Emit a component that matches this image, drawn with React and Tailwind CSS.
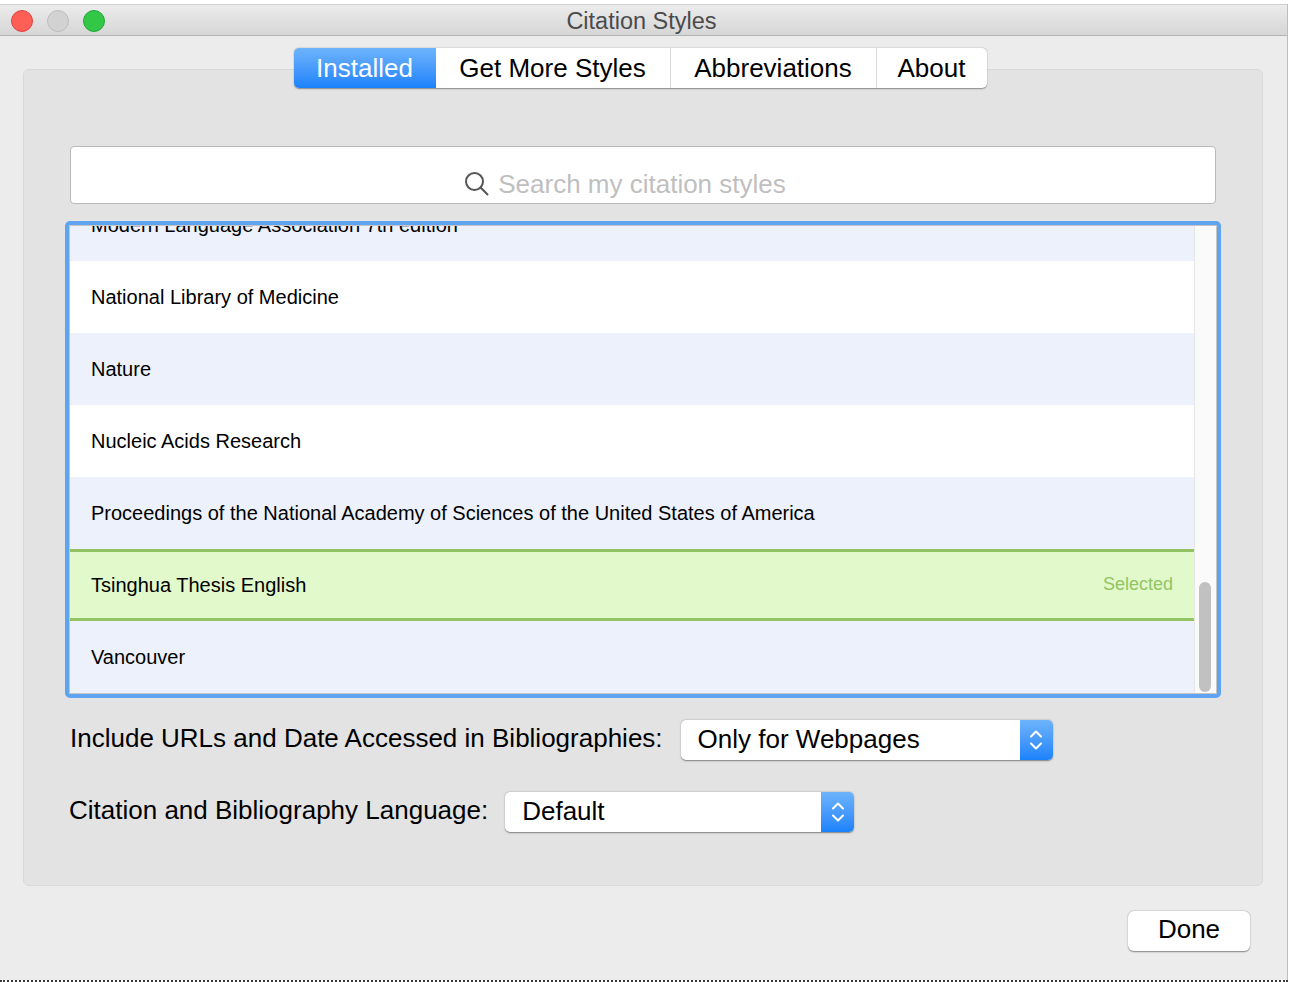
import React from "react";

const font = { fontFamily: '"Liberation Sans", Arial, sans-serif' };

function Chevrons() {
  return (
    <svg width="14" height="24" viewBox="0 0 14 24" fill="none" stroke="white" strokeWidth="2" strokeLinecap="round" strokeLinejoin="round">
      <path d="M2 8.5 L7 3.5 L12 8.5" />
      <path d="M2 15.5 L7 20.5 L12 15.5" />
    </svg>
  );
}

function Popup({ width, label }) {
  return (
    <div
      className="flex h-[40px] items-stretch rounded-[5px] bg-white shadow-[0_0.5px_1.5px_rgba(0,0,0,0.45)] overflow-hidden"
      style={{ width }}
    >
      <div className="flex flex-1 items-center pb-[3px] pl-[17px] text-[26px] leading-[30px] text-black">{label}</div>
      <div className="flex w-[33px] items-center justify-center bg-gradient-to-b from-[#6db3fb] to-[#1a82fb]">
        <Chevrons />
      </div>
    </div>
  );
}

const rows = [
  { t: "Modern Language Association 7th edition", bg: "bg-[#edf1fb]" },
  { t: "National Library of Medicine", bg: "bg-white" },
  { t: "Nature", bg: "bg-[#edf1fb]" },
  { t: "Nucleic Acids Research", bg: "bg-white" },
  { t: "Proceedings of the National Academy of Sciences of the United States of America", bg: "bg-[#edf1fb]" },
  { t: "Tsinghua Thesis English", bg: "sel" },
  { t: "Vancouver", bg: "bg-[#edf1fb]" },
];

export default function App() {
  return (
    <div className="relative h-[982px] w-[1290px] overflow-hidden bg-white" style={font}>
      <div className="mt-[4px] flex h-[976px] w-[1288px] flex-col border-r border-[#bdbdbd] bg-[#ececec]">
        {/* Title bar */}
        <div className="relative flex h-[32px] shrink-0 items-center justify-center border-t border-b border-t-[#d0d0d0] border-b-[#b3b3b3] bg-gradient-to-b from-[#ececec] to-[#d6d6d6]">
          <div className="absolute left-[11px] top-[5px] flex gap-[14px]">
            <div className="h-[22px] w-[22px] rounded-full border border-[#e0443e] bg-[#fd5f57]" />
            <div className="h-[22px] w-[22px] rounded-full border border-[#bdbdbd] bg-[#d2d2d2]" />
            <div className="h-[22px] w-[22px] rounded-full border border-[#20a833] bg-[#33c748]" />
          </div>
          <span className="pr-[4px] pt-[2px] text-[23.5px] leading-[28px] text-[#4b4b4b]">Citation Styles</span>
        </div>

        {/* Body */}
        <div className="flex flex-1 flex-col pt-[12px]">
          {/* Tabs */}
          <div className="relative z-10 flex justify-center pr-[7px]">
            <div className="flex h-[40px] overflow-hidden rounded-[5px] bg-white text-[26px] shadow-[0_0.5px_1.5px_rgba(0,0,0,0.4)]">
              <div className="flex w-[142px] items-center justify-center bg-gradient-to-b from-[#6db3fb] to-[#1a82fb] text-white">
                Installed
              </div>
              <div className="flex w-[235px] items-center justify-center border-r border-[#dadada] text-black">
                Get More Styles
              </div>
              <div className="flex w-[206px] items-center justify-center border-r border-[#dadada] text-black">
                Abbreviations
              </div>
              <div className="flex w-[110px] items-center justify-center text-black">About</div>
            </div>
          </div>

          {/* Panel */}
          <div className="mx-[23px] -mt-[19px] flex h-[817px] w-[1240px] flex-col rounded-[6px] border border-[#d9d9d9] bg-[#e3e3e3] px-[41px] pt-[76px]">
            {/* Search */}
            <div className="mx-[5px] flex h-[58px] items-center justify-center rounded-[4px] border border-[#b9b9b9] bg-white pr-[36px] pt-[18px]">
              <svg width="26" height="26" viewBox="0 0 26 26" fill="none" stroke="#555" strokeWidth="2">
                <circle cx="10.5" cy="10.5" r="8.5" />
                <path d="M16.8 16.8 L23.5 23.5" strokeLinecap="round" />
              </svg>
              <span className="ml-[8px] text-[26px] text-[#bfbfbf]">Search my citation styles</span>
            </div>

            {/* List */}
            <div className="mt-[17px] h-[477px] rounded-[5px] border-[4px] border-[#5fa4f0]">
              <div className="flex h-full border border-[#c4c4c4] bg-white">
                <div className="flex-1 overflow-hidden">
                  <div className="-mt-[37px]">
                    {rows.map((r) =>
                      r.bg === "sel" ? (
                        <div
                          key={r.t}
                          className="flex h-[72px] items-center justify-between border-y-[3px] border-[#93c464] bg-[#e2f9cc] pb-[1px] pl-[21px] pr-[21px]"
                        >
                          <span className="text-[20px] text-black">{r.t}</span>
                          <span className="text-[18px] text-[#93c464]">Selected</span>
                        </div>
                      ) : (
                        <div key={r.t} className={`flex h-[72px] items-center pb-[1px] pl-[21px] ${r.bg}`}>
                          <span className="text-[20px] text-black">{r.t}</span>
                        </div>
                      )
                    )}
                  </div>
                </div>
                <div className="flex w-[22px] flex-col justify-end border-l border-[#e6e6e6] bg-[#fafafa] pb-[1px] pl-[4px] pr-[5px]">
                  <div className="h-[110px] w-[12px] rounded-full bg-[#c1c1c1]" />
                </div>
              </div>
            </div>

            {/* Option rows */}
            <div className="mt-[22px] flex h-[40px] items-center gap-[18px] pl-[5px]">
              <span className="mb-[5px] text-[26px] leading-[30px] text-black">Include URLs and Date Accessed in Bibliographies:</span>
              <Popup width={372} label="Only for Webpages" />
            </div>
            <div className="mt-[32px] flex h-[40px] items-center gap-[17px] pl-[4px]">
              <span className="mb-[5px] text-[26px] leading-[30px] text-black">Citation and Bibliography Language:</span>
              <Popup width={349} label="Default" />
            </div>
          </div>

          {/* Done */}
          <div className="mt-[25px] flex justify-end pr-[37px]">
            <div className="flex h-[40px] w-[122px] items-center justify-center rounded-[6px] bg-white pb-[4px] text-[26px] leading-[30px] text-black shadow-[0_0.5px_1.5px_rgba(0,0,0,0.45)]">
              Done
            </div>
          </div>
        </div>
      </div>
      <div className="h-[2px] w-[1288px] border-t-2 border-dotted border-[#3a3a3a]" />
    </div>
  );
}
